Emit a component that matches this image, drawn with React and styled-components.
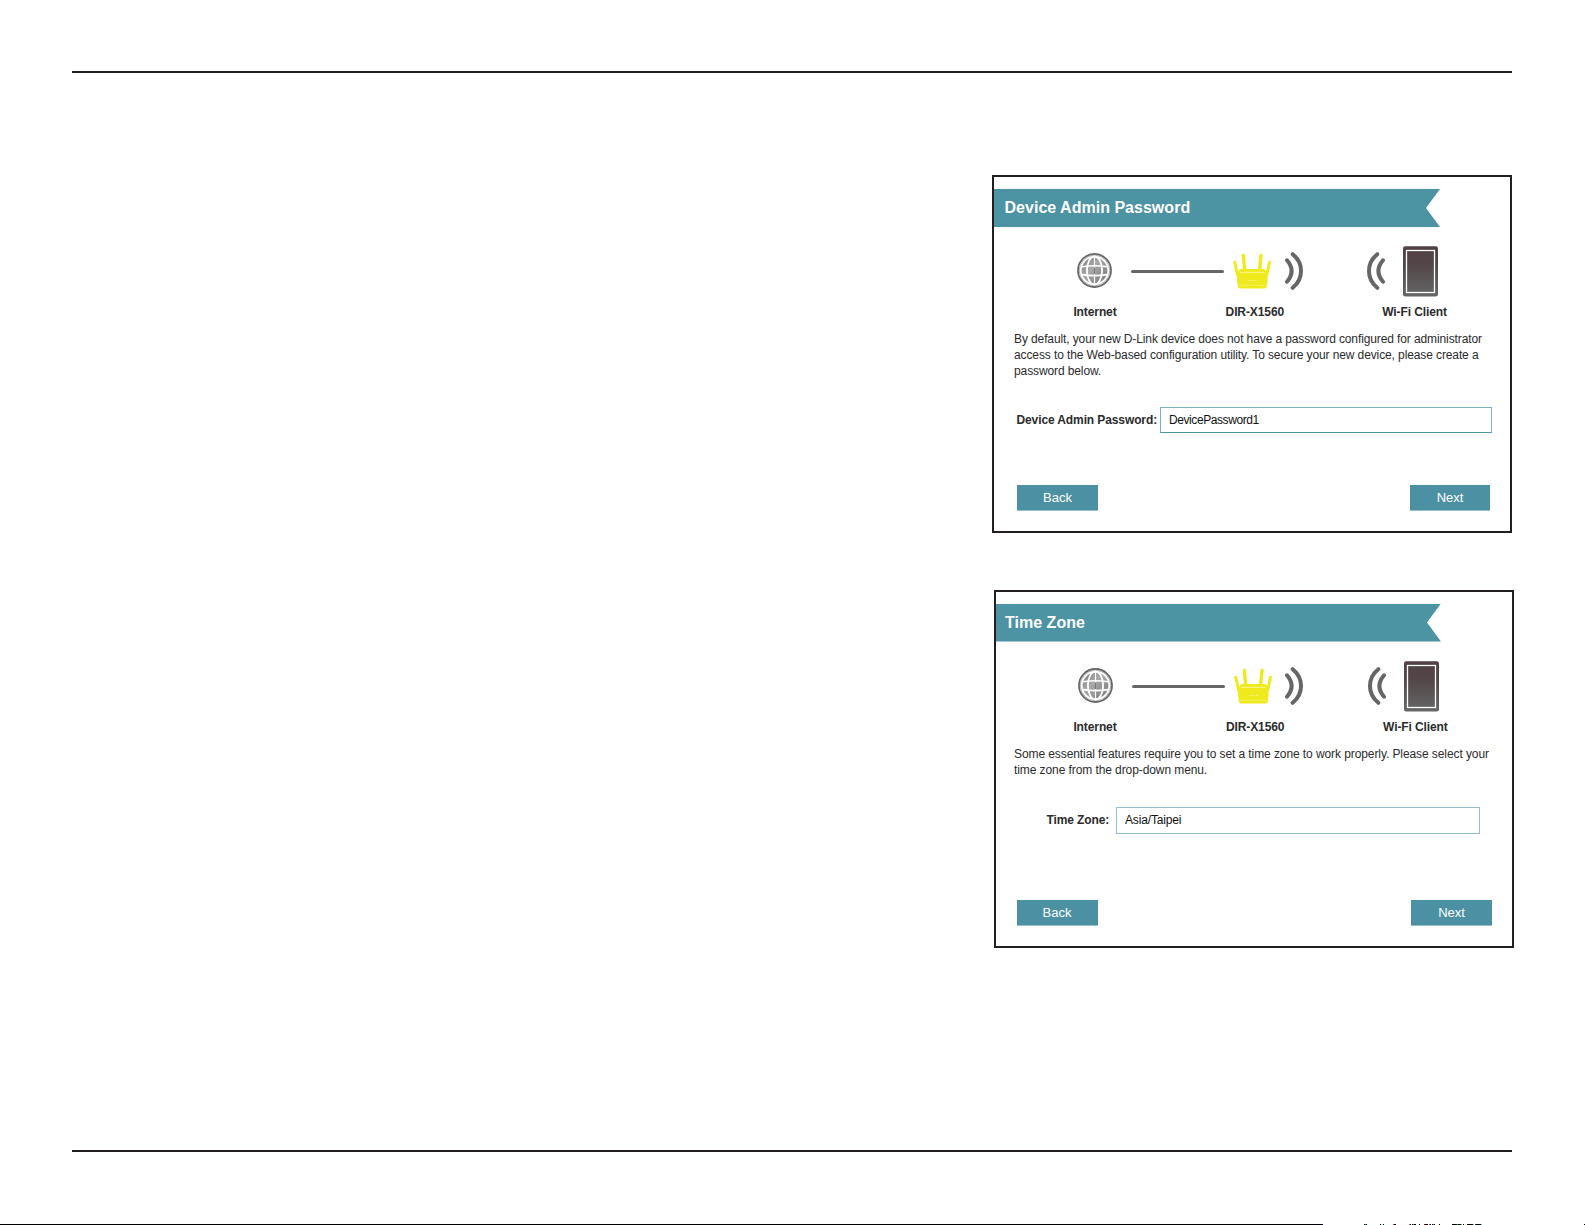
import React from "react";
import styled, { createGlobalStyle } from "styled-components";

const pages = [
  {
    title: "Device Admin Password",
    lines: [
      "By default, your new D-Link device does not have a password configured for administrator",
      "access to the Web-based configuration utility. To secure your new device, please create a",
      "password below.",
    ],
    label: "Device Admin Password:",
    value: "DevicePassword1",
    second: false,
  },
  {
    title: "Time Zone",
    lines: [
      "Some essential features require you to set a time zone to work properly. Please select your",
      "time zone from the drop-down menu.",
    ],
    label: "Time Zone:",
    value: "Asia/Taipei",
    second: true,
  },
];

// [x, width, colour] of the marks on the bottom edge of the sheet
const marks = [
  [0, 1322, "#000"], [1322, 1, "#00a"], [1364, 1, "#000"], [1365, 1, "#0a0"], [1366, 1, "#006"],
  [1380, 1, "#000"], [1381, 2, "#9ff"], [1383, 1, "#000"],
  [1393, 1, "#f33"], [1394, 2, "#000"], [1409, 1, "#e50"], [1410, 1, "#00a"],
  [1412, 1, "#000"], [1413, 1, "#0b0"], [1414, 2, "#000"], [1419, 1, "#000"],
  [1424, 1, "#a00"], [1425, 3, "#000"], [1429, 1, "#e22"], [1430, 1, "#009"],
  [1432, 1, "#000"], [1433, 1, "#0c0"], [1434, 1, "#000"], [1438, 1, "#ff8"], [1439, 1, "#000"],
  [1452, 5, "#000"], [1457, 1, "#0a0"], [1458, 3, "#000"], [1461, 1, "#0dd"], [1463, 1, "#000"],
  [1465, 1, "#fe6"], [1467, 6, "#000"], [1473, 1, "#0ee"], [1475, 1, "#a00"],
  [1476, 5, "#000"], [1481, 1, "#0ee"], [1584, 1, "#000"],
];

function Globe() {
  return (
    <svg width="35" height="36" viewBox="0 0 35 36">
      <defs>
        <linearGradient id="globe" x1="0" y1="0" x2="1" y2="1">
          <stop offset="0" stopColor="#777" />
          <stop offset="0.4" stopColor="#aaa" />
          <stop offset="1" stopColor="#777" />
        </linearGradient>
      </defs>
      <circle cx="17.5" cy="17.5" r="16.5" fill="#fff" stroke="#666" strokeWidth="1.8" />
      <circle cx="17.5" cy="17.5" r="15.3" fill="none" stroke="#aaa" strokeWidth="1" />
      <circle cx="17.5" cy="17.5" r="12.9" fill="url(#globe)" />
      <g fill="none" stroke="#fff">
        <ellipse cx="17.5" cy="17.5" rx="7.6" ry="14" strokeWidth="1.8" />
        <path d="M17.5 4v27" strokeWidth="1.2" />
        <path d="M5 13.8q12.5-2 25 0M5 21.6q12.5 2 25 0" strokeWidth="1.6" />
      </g>
      <path d="M17.5 14.500v6.500" stroke="#777" strokeWidth="1.200" />
    </svg>
  );
}

function Router() {
  return (
    <svg width="39" height="36" viewBox="0 0 39 36">
      <g stroke="#efea1c" strokeLinecap="round" fill="none">
        <path d="M1.8 9.3l2.8 13M36.5 9.3l-2.8 13" strokeWidth="3" />
        <path d="M10.3 2.4l1.5 15M28 2.4l-1.5 15" strokeWidth="3.4" />
      </g>
      <path
        d="M8.5 15.9h21.5q2.5 0 3.1 2.2l1.4 6.5v3.500l-.7 5.200q-.3 2.200-2.200 2.200h-24.600q-2 0-2.200-2.200l-.7-5.200v-3.500l1.400-6.500q.6-2.200 3-2.200z"
        fill="#efea1c"
      />
      <path d="M7 19.3h24.500" stroke="#fbfac0" strokeWidth=".8" />
      <path d="M5.500 32.300h27.500" stroke="#f7f58a" strokeWidth=".6" />
      <path d="M15.500 27.500h9" stroke="#f8f69a" strokeWidth=".8" strokeDasharray="1.500 .7" />
    </svg>
  );
}

function Waves({ left }) {
  return (
    <svg width="19" height="38" viewBox="0 0 19 38">
      <g
        transform={left ? "translate(19 0) scale(-1 1)" : undefined}
        fill="none"
        stroke="#666"
        strokeWidth="4"
        strokeLinecap="round"
      >
        <path d="M2 8.300q9.200 10.700 0 21.400" />
        <path d="M7.700 2.200c11.100 9 11.100 24.600 0 33.600" />
      </g>
    </svg>
  );
}

function Tablet() {
  return (
    <svg width="35" height="51" viewBox="0 0 35 51">
      <defs>
        <linearGradient id="tablet" x1="0" y1="0" x2="0" y2="1">
          <stop offset="0" stopColor="#524045" />
          <stop offset="0.35" stopColor="#524648" />
          <stop offset="1" stopColor="#666" />
        </linearGradient>
      </defs>
      <rect y=".3" width="35" height="50.200" rx="2.200" fill="url(#tablet)" />
      <rect x="3.500" y="4.500" width="28" height="42" fill="none" stroke="#fff" strokeWidth="1.300" />
    </svg>
  );
}

function WizardPage({ title, lines, label, value, second }) {
  return (
    <Card $second={second}>
      <Banner $second={second}>{title}</Banner>
      <Diagram $second={second}>
        <Globe />
        <Cable />
        <Router />
        <Waves />
        <Waves left />
        <Tablet />
      </Diagram>
      <Captions $second={second}>
        <span>Internet</span>
        <span>DIR-X1560</span>
        <span>Wi-Fi Client</span>
      </Captions>
      <Message $second={second}>
        {lines.map((line) => (
          <div key={line}>{line}</div>
        ))}
      </Message>
      <Field $second={second}>
        <Label>{label}</Label>
        <Input $second={second} type="text" defaultValue={value} aria-label={label} />
      </Field>
      <Actions $second={second}>
        <Button type="button">Back</Button>
        <Button type="button" $narrow={!second}>Next</Button>
      </Actions>
    </Card>
  );
}

export default function App() {
  return (
    <Sheet>
      <GlobalStyle />
      <Rule />
      <Content>
        {pages.map((page) => (
          <WizardPage key={page.title} {...page} />
        ))}
      </Content>
      <Rule />
      <Edge viewBox="0 0 1585 1" width="1585" height="1" shapeRendering="crispEdges">
        {marks.map(([x, width, fill]) => (
          <rect key={x} x={x} width={width} height="1" fill={fill} />
        ))}
      </Edge>
    </Sheet>
  );
}

const GlobalStyle = createGlobalStyle`
  * {
    box-sizing: border-box;
  }

  body {
    margin: 0;
    background: #fff;
    color: #2b2b2b;
    font-family: "Liberation Sans", Arial, sans-serif;
    font-size: 12px;
  }

  svg {
    display: block;
    flex: none;
  }
`;

const Sheet = styled.main`
  display: flex;
  flex-direction: column;
  width: 1585px;
  height: 1225px;
  padding-top: 71px;
  overflow: hidden;
`;

const Rule = styled.hr`
  flex: none;
  width: 1440px;
  height: 2px;
  margin: 0 0 0 72px;
  border: 0;
  background: #231f20;
`;

const Content = styled.div`
  display: flex;
  flex-direction: column;
  gap: 57px;
  height: 1077px;
  padding: 102px 0 0 992px;
`;

const Edge = styled.svg`
  margin-top: auto;
`;

const Card = styled.section`
  display: flex;
  flex-direction: column;
  width: 520px;
  height: 358px;
  margin-left: ${({ $second }) => ($second ? 2 : 0)}px;
  border: 2px solid #231f20;
`;

const Banner = styled.h2`
  flex: none;
  width: ${({ $second }) => ($second ? 445 : 446)}px;
  height: 38px;
  margin: ${({ $second }) => ($second ? 11.5 : 12)}px 0 0;
  padding-left: ${({ $second }) => ($second ? 9 : 10.5)}px;
  background: #4c93a3;
  clip-path: polygon(0 0, 100% 0, calc(100% - 14px) 50%, 100% 100%, 0 100%);
  color: #fff;
  font-size: 16px;
  letter-spacing: 0.02px;
  line-height: 38px;
`;

const Diagram = styled.div`
  display: flex;
  align-items: center;
  height: 51px;
  margin-top: ${({ $second }) => ($second ? 19.5 : 19)}px;
  padding-left: ${({ $second }) => ($second ? 81.5 : 83)}px;

  svg:not(:last-child) {
    margin-bottom: ${({ $second }) => ($second ? 2 : 1)}px;
  }

  svg:nth-of-type(2) {
    margin-left: 9px;
  }

  svg:nth-of-type(3) {
    margin-left: 12.5px;
  }

  svg:nth-of-type(4) {
    margin-left: 62.5px;
  }

  svg:nth-of-type(5) {
    margin-left: ${({ $second }) => ($second ? 18.5 : 18)}px;
  }
`;

const Cable = styled.div`
  width: 93px;
  height: 3.5px;
  margin-left: 19px;
  border-radius: 2px;
  background: #666;
`;

const Captions = styled.div`
  display: flex;
  height: 14px;
  margin-top: 8px;
  padding-left: ${({ $second }) => ($second ? 39 : 41)}px;
  font-weight: bold;
  letter-spacing: -0.1px;
  line-height: 14px;
  text-align: center;

  span {
    width: 120px;
  }

  span + span {
    margin-left: ${({ $second }) => ($second ? 40.2 : 39.8)}px;
  }
`;

const Message = styled.div`
  flex: none;
  height: 49px;
  margin-top: ${({ $second }) => ($second ? 11.5 : 12)}px;
  padding-left: ${({ $second }) => ($second ? 18 : 20)}px;
  letter-spacing: ${({ $second }) => ($second ? -0.085 : -0.11)}px;
  line-height: 16.2px;
  white-space: nowrap;
`;

const Field = styled.div`
  display: flex;
  justify-content: space-between;
  align-items: center;
  margin: ${({ $second }) => ($second ? "12px 32px 0 50.5px" : "27px 18px 0 22.5px")};
`;

const Label = styled.label`
  font-weight: bold;
  letter-spacing: -0.11px;
  white-space: nowrap;
`;

const Input = styled.input`
  width: ${({ $second }) => ($second ? 364 : 332)}px;
  height: ${({ $second }) => ($second ? 27 : 26)}px;
  padding: 0 8px;
  border: 1px solid ${({ $second }) => ($second ? "#93c0ca" : "#7ab4c0")};
  border-bottom-color: ${({ $second }) => ($second ? "#93c0ca" : "#4c93a3")};
  background: #fff;
  color: #111;
  font: 12px "Liberation Sans", Arial, sans-serif;
  letter-spacing: ${({ $second }) => ($second ? -0.15 : -0.42)}px;
`;

const Actions = styled.div`
  display: flex;
  justify-content: space-between;
  margin: auto 20px 20px ${({ $second }) => ($second ? 20.5 : 23)}px;
`;

const Button = styled.button`
  width: ${({ $narrow }) => ($narrow ? 80 : 81)}px;
  height: 26px;
  padding: 0 0 1px;
  border: 0;
  border-bottom: 1px solid #94bfc9;
  background: #4c91a3;
  color: #fff;
  font: 13px "Liberation Sans", Arial, sans-serif;
`;
